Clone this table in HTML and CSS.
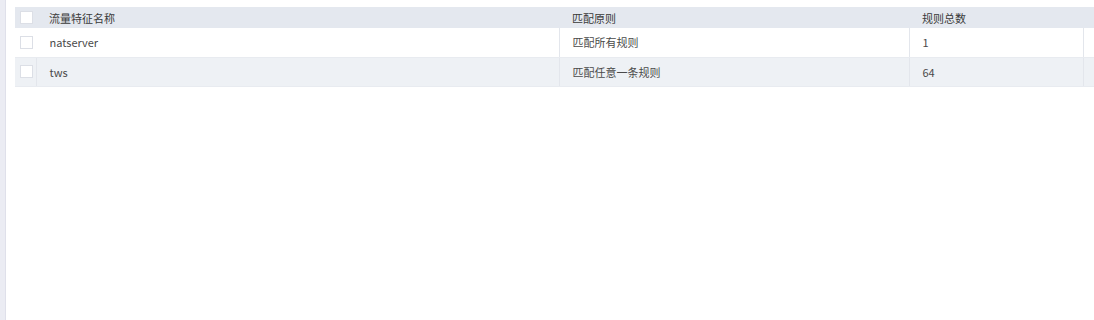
FILE: index.html
```html
<!DOCTYPE html>
<html>
<head>
<meta charset="utf-8">
<link rel="stylesheet" href="styles.css">
</head>
<body>
<div class="page">
  <div class="side"></div>
  <main class="main">
    <table class="grid">
      <colgroup>
        <col class="c-check"><col class="c-name"><col class="c-rule"><col class="c-count"><col class="c-rest">
      </colgroup>
      <thead>
        <tr>
          <th class="check"><span class="box"></span></th>
          <th>流量特征名称</th>
          <th>匹配原则</th>
          <th>规则总数</th>
          <th></th>
        </tr>
      </thead>
      <tbody>
        <tr>
          <td class="check"><span class="box"></span></td>
          <td>natserver</td>
          <td>匹配所有规则</td>
          <td>1</td>
          <td></td>
        </tr>
        <tr class="alt">
          <td class="check"><span class="box"></span></td>
          <td>tws</td>
          <td>匹配任意一条规则</td>
          <td>64</td>
          <td></td>
        </tr>
      </tbody>
    </table>
  </main>
</div>
</body>
</html>
```
FILE: styles.css
```css
html, body {
  margin: 0;
  padding: 0;
  background: #fff;
  font-family: "Noto Sans CJK SC", "Noto Sans", sans-serif;
  font-size: 11px;
  color: #333;
}
.page {
  display: flex;
  height: 320px;
}
.side {
  width: 5px;
  background: #ebecf3;
  border-right: 1px solid #dfe0ea;
  flex: none;
}
.main {
  flex: 1;
  padding: 7px 0 0 9px;
}
.grid {
  width: 100%;
  border-collapse: collapse;
  table-layout: fixed;
}
.c-check { width: 21px; }
.c-name { width: 523px; }
.c-rule { width: 350px; }
.c-count { width: 174px; }
.grid th {
  height: 21px;
  padding: 0 0 0 13px;
  background: #e4e8ef;
  font-weight: normal;
  text-align: left;
  color: #3a3a3a;
  border: none;
}
.grid td {
  height: 28.5px;
  padding: 0 0 0 13px;
  color: #4a4a4a;
  border-left: 1px solid #e3e6ec;
  border-bottom: 1px solid #e8ebf0;
}
.grid td:first-child { border-left: none; }
.grid tr:first-child td:nth-child(2) { border-left-color: #fff; }
.grid tr.alt td { background: #eef1f5; }
.grid .check {
  padding: 0 0 0 5px;
}
.box {
  display: block;
  width: 11px;
  height: 11px;
  background: #fff;
  border: 1px solid #dcdfe6;
}
```
